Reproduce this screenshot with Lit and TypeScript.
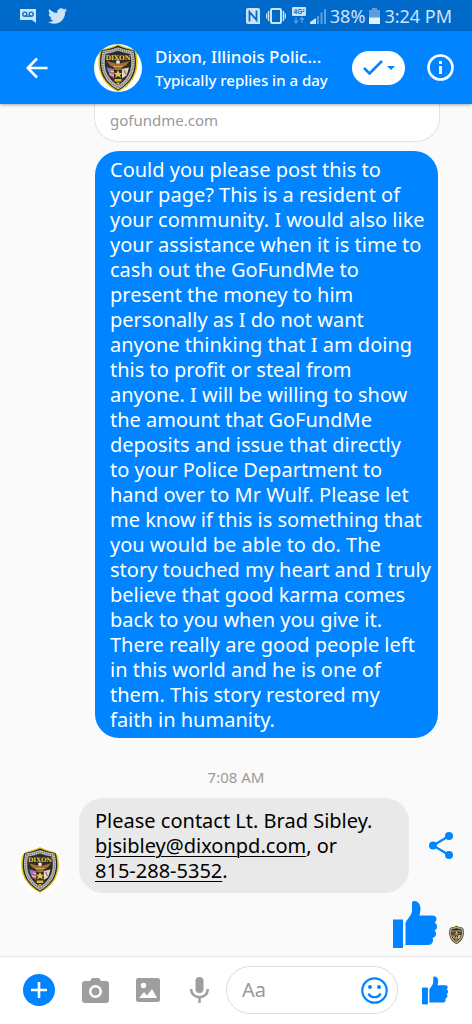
import { LitElement, html, css } from "lit";
import { customElement, property } from "lit/decorators.js";

const REQUEST = `Could you please post this to
your page? This is a resident of
your community. I would also like
your assistance when it is time to
cash out the GoFundMe to
present the money to him
personally as I do not want
anyone thinking that I am doing
this to profit or steal from
anyone. I will be willing to show
the amount that GoFundMe
deposits and issue that directly
to your Police Department to
hand over to Mr Wulf. Please let
me know if this is something that
you would be able to do. The
story touched my heart and I truly
believe that good karma comes
back to you when you give it.
There really are good people left
in this world and he is one of
them. This story restored my
faith in humanity.`;

@customElement("dept-badge")
export class DeptBadge extends LitElement {
  static styles = css`
    :host { display: block; border-radius: 50%; overflow: hidden; background: #fff; }
    .art { display: block; width: 100%; height: 100%; }
  `;
  render() {
    return html`<svg class="art" viewBox="0 0 48 48" role="img" aria-label="Dixon police badge">
      <path d="M6 6C13 4 18 3 24 0C30 3 35 4 42 6C44.500 17 44.500 26 39 35C35 41 30 45 24 48C18 45 13 41 9 35C3.500 26 3.500 17 6 6Z" fill="#e0c81c"/>
      <path d="M7.500 6.500C14 5 19 4 24 1.500C29 4 34 5 40.500 6.500C43 18 42.500 26 38 34C34 40 29 44 24 46.500C19 44 14 40 10 34C5.500 26 5 18 7.500 6.500Z" fill="#23211f"/>
      <path d="M10 8.500C16 7.500 20 6.500 24 5C28 6.500 32 7.500 38 8.500C40 18 40 25 35.500 32.500C32 38 28.500 41 24 43.500C19.500 41 16 38 12.500 32.500C8 25 8 18 10 8.500Z" fill="#2e2b27" stroke="#bdbdbd" stroke-width="3.400"/>
      <path d="M10 8.500C16 7.500 20 6.500 24 5C28 6.500 32 7.500 38 8.500C40 18 40 25 35.500 32.500C32 38 28.500 41 24 43.500C19.500 41 16 38 12.500 32.500C8 25 8 18 10 8.500Z" fill="none" stroke="#6c6b69" stroke-width="1.600" stroke-dasharray="1 1.200"/>
      <text x="24" y="15.500" text-anchor="middle" font-family="DejaVu Serif, serif" font-size="6.500" font-weight="700" fill="#e8cf2f">DIXON</text>
      <path d="M12.500 17L22 19.500L24 17.500L26 19.500L35.500 17L32 21.500L28.500 23L27 26H21L19.500 23L16 21.500Z" fill="#a56c35"/>
      <path d="M22.300 16.500h3.400v3h-3.400z" fill="#f5f0e4"/>
      <path d="M19 22h10v1H19z" fill="#d9a25c"/>
      <path d="M13 23.500l7 1.500v9.500l-4.500-3z" fill="#c4607a"/><path d="M13 23.500l3.500.8v4.500l-2.500-.8z" fill="#6a86c4"/>
      <path d="M16.500 27l3.500 1M15.500 30l4.500 1.500" stroke="#f0dde2" stroke-width="1"/>
      <path d="M28 25l7-1.500-2.500 8-4.500 3z" fill="#dcd9c4"/><path d="M30 26l2 4.500" stroke="#b57a6a" stroke-width="1.500"/>
      <path d="M24 26l1.500 3h3l-2.500 2 1 3-3-2-3 2 1-3-2.500-2h3z" fill="#e4cb2c"/>
      <path d="M20.500 35h7v2.500h-7zM22.500 38.500h3v2h-3z" fill="#d4bd37"/>
    </svg>`;
  }
}

@customElement("thumb-icon")
export class ThumbIcon extends LitElement {
  static styles = css`
    :host { display: block; color: #0084ff; }
    .art { display: block; width: 100%; height: 100%; }
  `;
  render() {
    return html`<svg class="art" viewBox="0 0 44 47" fill="currentColor" aria-hidden="true">
      <path d="M0 18.500h10V47H0z"/>
      <path d="M12.500 22C14 18 19 14 19 9.500V2C19 .5 20 0 21.500 0C25.500 0 27.500 4 27.500 8C27.500 10.500 26.500 13 26.500 14.500H39.500C42 14.500 43.500 16 43.500 18C43.500 20 42.500 21 41.500 21.500C43 22.500 44 23.500 44 25.500C44 28 43 29 41.500 29.500C42.500 30.500 43.200 31.500 43 33.500C42.800 35.500 41.500 36.500 39.500 37C40.500 38.500 40 40 39.500 41.500C38.800 43.200 37 44 34.500 44H12.500Z"/>
    </svg>`;
  }
}

@customElement("status-bar")
export class StatusBar extends LitElement {
  static styles = css`
    :host { display: flex; align-items: center; height: 31px; padding: 0 20px; background: #006acb; color: #cfe3f7; font-size: 18px; line-height: 24px; }
    .side { display: flex; align-items: center; gap: 4px; }
    .left { gap: 12px; }
    .right { margin-left: auto; }
    .radio { gap: 6px; display: flex; align-items: center; }
    svg { display: block; }
  `;
  render() {
    return html`
      <div class="side left">
        <svg width="16" height="14" viewBox="0 0 16 14"><path d="M0 0h16v14l-4-3H0z" fill="#cfe3f7"/><g fill="none" stroke="#006acb" stroke-width="1.300"><circle cx="4.800" cy="5.200" r="2"/><circle cx="11.200" cy="5.200" r="2"/><path d="M4.800 7.200h6.400"/></g></svg>
        <svg width="19" height="16" viewBox="0 2 24 20" fill="#cfe3f7"><path d="M23.953 4.570a10 10 0 01-2.825.775 4.958 4.958 0 002.163-2.723c-.951.555-2.005.959-3.127 1.184a4.920 4.920 0 00-8.384 4.482C7.690 8.095 4.067 6.130 1.640 3.162a4.822 4.822 0 00-.666 2.475c0 1.710.870 3.213 2.188 4.096a4.904 4.904 0 01-2.228-.616v.060a4.923 4.923 0 003.946 4.827 4.996 4.996 0 01-2.212.085 4.936 4.936 0 004.604 3.417 9.867 9.867 0 01-6.102 2.105c-.390 0-.779-.023-1.170-.067a13.995 13.995 0 007.557 2.209c9.053 0 13.998-7.496 13.998-13.985 0-.210 0-.420-.015-.630A9.935 9.935 0 0024 4.590z"/></svg>
      </div>
      <div class="side right">
        <div class="radio">
        <svg width="14" height="16" viewBox="0 0 14 16"><path d="M2 0H12Q14 0 14 2V16H2Q0 16 0 14V2Q0 0 2 0Z" fill="#cfe3f7"/><path d="M3.500 13.500V4L10.500 12V2.500" fill="none" stroke="#006acb" stroke-width="1.800"/></svg>
        <svg width="20" height="16" viewBox="0 0 20 16" fill="none" stroke="#cfe3f7"><rect x="5" y="1" width="10" height="14" rx="1" stroke-width="2"/><path d="M2.500 3v10M17.500 3v10" stroke-width="1.500"/><path d="M.6 5.500v5M19.400 5.500v5" stroke-width="1.200"/></svg>
        <svg width="14" height="17" viewBox="0 0 14 17"><rect width="14" height="9" rx="1" fill="#cfe3f7"/><text x="7" y="7" text-anchor="middle" font-family="Liberation Sans, sans-serif" font-size="6.500" font-weight="700" fill="#006acb">4G²</text><path d="M4 10.500v5M2 13.500l2 2.500 2-2.500M10 16v-5M8 13l2-2.500 2 2.500" fill="none" stroke="#5b9fdc" stroke-width="1.200"/></svg>
        </div>
        <svg width="16" height="16" viewBox="0 0 16 16"><path d="M0 16V14L6 10V16Z" fill="#cfe3f7"/><path d="M7 8h2v8H7zM10.500 4.500h2v11.500h-2zM14 1h2v15h-2z" fill="#5b9fdc"/></svg>
        <span>38%</span>
        <svg width="11" height="16" viewBox="0 0 11 16"><path d="M3 0h5v2h3v14H0V2h3z" fill="#5b9fdc"/><path d="M0 9.500h11V16H0z" fill="#e4f1fd"/></svg>
        <span>3:24 PM</span>
      </div>`;
  }
}

@customElement("chat-header")
export class ChatHeader extends LitElement {
  static styles = css`
    :host { display: flex; align-items: center; height: 73px; padding: 0 18px 0 26px; background: #0084ff; color: #fff; box-shadow: 0 1px 3px #0005; z-index: 1; }
    button { all: unset; box-sizing: border-box; cursor: pointer; display: flex; align-items: center; justify-content: center; flex: none; }
    .face { width: 48px; height: 48px; margin-left: 46px; flex: none; }
    .who { margin: 0 auto 0 13px; min-width: 0; white-space: nowrap; }
    .name { margin: 0; font-size: 17px; line-height: 24px; font-weight: 500; }
    .note { margin: 0; font-size: 15px; line-height: 22px; font-weight: 500; }
    .pill { width: 53px; height: 34px; border-radius: 17px; background: #fff; gap: 4px; }
    .info { margin-left: 22px; }
    svg { display: block; }
  `;
  render() {
    return html`
      <button aria-label="Back"><svg width="22" height="22" viewBox="0 0 22 22" fill="none" stroke="#fff" stroke-width="2.600"><path d="M21.500 11H2M11 1.500L1.800 11L11 20.500"/></svg></button>
      <dept-badge class="face"></dept-badge>
      <div class="who"><h1 class="name">Dixon, Illinois Polic...</h1><p class="note">Typically replies in a day</p></div>
      <button class="pill" aria-label="Mark as done"><svg width="20" height="15" viewBox="0 0 20 15" fill="none" stroke="#0084ff" stroke-width="2.600"><path d="M1 8l5.500 5.500L19 1"/></svg><svg width="8" height="4" viewBox="0 0 8 4"><path d="M0 0h8L4 4z" fill="#0084ff"/></svg></button>
      <button class="info" aria-label="Information"><svg width="27" height="27" viewBox="0 0 27 27"><circle cx="13.500" cy="13.500" r="12" fill="none" stroke="#fff" stroke-width="2.600"/><path d="M12.100 12h2.800v8h-2.800zM12.100 7h2.800v3h-2.800z" fill="#fff"/></svg></button>`;
  }
}

@customElement("chat-thread")
export class ChatThread extends LitElement {
  @property() message = REQUEST;
  static styles = css`
    :host { display: flex; flex-direction: column; flex: 1; background: #fafafa; font-size: 20px; line-height: 25px; }
    .card { margin: 0 32px 0 94px; height: 38px; box-sizing: border-box; padding: 4px 15px; border: 1px solid #e4e4e4; border-top: 0; border-radius: 0 0 24px 24px; background: #fff; color: #999; font-size: 15px; line-height: 24px; }
    .sent { margin: 9px 34px 0 95px; padding: 6px 0 6px 15px; border-radius: 24px; background: #0084ff; color: #fff; white-space: pre; }
    .time { margin: 28px 0 9px; text-align: center; color: #999; font-size: 15px; line-height: 23px; }
    .row { display: flex; align-items: center; padding: 0 19px 0 17px; }
    .face { width: 46px; height: 46px; flex: none; align-self: flex-end; }
    .reply { flex: 1; margin: 0 20px 0 16px; padding: 10px 0 10px 16px; border-radius: 24px; background: #e9e9e9; color: #000; white-space: nowrap; }
    .reply a { color: inherit; text-decoration-thickness: 1px; text-underline-offset: 3px; }
    .share { all: unset; cursor: pointer; display: block; }
    .share svg { display: block; }
    .liked { display: flex; justify-content: flex-end; align-items: flex-end; gap: 10px; padding: 8px 6px 8px; }
    .thumb { width: 44px; height: 47px; }
    .seen { width: 19px; height: 20px; margin-bottom: 3px; }
  `;
  render() {
    return html`
      <div class="card">gofundme.com</div>
      <div class="sent">${this.message}</div>
      <div class="time">7:08 AM</div>
      <div class="row">
        <dept-badge class="face"></dept-badge>
        <div class="reply">Please contact Lt. Brad Sibley.<br><a href="mailto:bjsibley@dixonpd.com">bjsibley@dixonpd.com</a>, or<br><a href="tel:815-288-5352">815-288-5352</a>.</div>
        <button class="share" aria-label="Share"><svg width="24" height="27" viewBox="0 0 24 27"><path d="M20 4L4 13.500L20 23" fill="none" stroke="#0084ff" stroke-width="2.200"/><g fill="#0084ff"><circle cx="20" cy="4" r="4"/><circle cx="4" cy="13.500" r="4"/><circle cx="20" cy="23" r="4"/></g></svg></button>
      </div>
      <div class="liked"><thumb-icon class="thumb"></thumb-icon><dept-badge class="seen"></dept-badge></div>`;
  }
}

@customElement("chat-composer")
export class ChatComposer extends LitElement {
  static styles = css`
    :host { display: flex; align-items: center; height: 68px; box-sizing: border-box; padding: 0 24px 1px 23px; border-top: 1px solid #e6e6e6; background: #fff; }
    button { all: unset; cursor: pointer; display: block; flex: none; }
    svg { display: block; }
    .tools { display: flex; align-items: center; gap: 27px; }
    .mic { margin-left: 3px; }
    .field { display: flex; align-items: center; flex: 1; min-width: 0; margin: 0 24px 0 17px; height: 48px; box-sizing: border-box; border: 1px solid #dedede; border-radius: 24px; padding: 0 9px 0 15px; }
    input { all: unset; flex: 1; min-width: 0; font-size: 20px; line-height: 28px; color: #000; }
    input::placeholder { color: #999; opacity: 1; }
    .thumb { width: 26px; height: 29px; }
  `;
  render() {
    return html`
      <div class="tools">
        <button aria-label="More"><svg width="32" height="32" viewBox="0 0 32 32"><circle cx="16" cy="16" r="16" fill="#0084ff"/><path d="M16 8v16M8 16h16" stroke="#fff" stroke-width="2.600"/></svg></button>
        <button aria-label="Camera"><svg width="27" height="25" viewBox="0 0 27 25"><path d="M8 3l2-3h7l2 3h5q3 0 3 3v16q0 3-3 3H3q-3 0-3-3V6q0-3 3-3z" fill="#9e9e9e"/><circle cx="13.500" cy="13.500" r="5.200" fill="none" stroke="#fff" stroke-width="2.600"/></svg></button>
        <button aria-label="Gallery"><svg width="24" height="24" viewBox="0 0 24 24"><rect width="24" height="24" rx="2.500" fill="#9e9e9e"/><circle cx="7.500" cy="7.500" r="2.700" fill="#fff"/><path d="M3 20l5-6 3 3.500 5-6.500 5 9z" fill="#fff"/></svg></button>
        <button class="mic" aria-label="Voice message"><svg width="19" height="26" viewBox="0 0 19 26"><rect x="5.500" y="0" width="8" height="16" rx="4" fill="#9e9e9e"/><path d="M1.200 12c0 11 16.600 11 16.600 0M9.500 20v6" fill="none" stroke="#9e9e9e" stroke-width="2.400"/></svg></button>
      </div>
      <div class="field"><input aria-label="Message" placeholder="Aa"><button aria-label="Emoji"><svg width="27" height="27" viewBox="0 0 27 27"><circle cx="13.500" cy="13.500" r="12.200" fill="none" stroke="#0084ff" stroke-width="2.200"/><circle cx="9" cy="10" r="2" fill="#0084ff"/><circle cx="18" cy="10" r="2" fill="#0084ff"/><path d="M7.500 16.500c2 5 10 5 12 0" fill="none" stroke="#0084ff" stroke-width="2.200"/></svg></button></div>
      <button aria-label="Send a like"><thumb-icon class="thumb"></thumb-icon></button>`;
  }
}

@customElement("app-root")
export class AppRoot extends LitElement {
  static styles = css`
    :host { display: flex; flex-direction: column; min-height: 100vh; font-family: "Noto Sans", Roboto, sans-serif; }
  `;
  render() {
    return html`<status-bar></status-bar><chat-header></chat-header><chat-thread></chat-thread><chat-composer></chat-composer>`;
  }
}
